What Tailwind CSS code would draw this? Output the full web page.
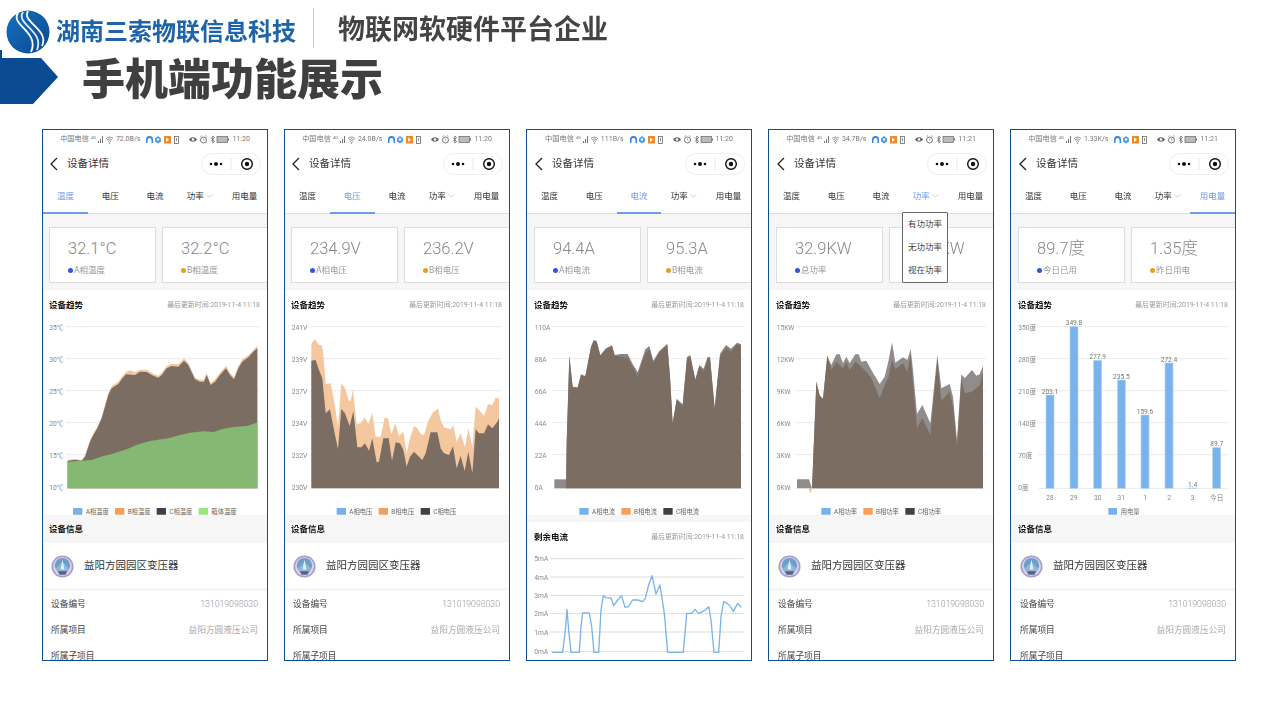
<!DOCTYPE html>
<html lang="zh-CN"><head><meta charset="utf-8"><title>手机端功能展示</title>
<script src="https://cdn.jsdelivr.net/npm/@tailwindcss/browser@4"></script></head>
<body class="bg-white w-[1279px] h-[720px] overflow-hidden font-['Roboto','Noto_Sans_CJK_SC',sans-serif]">
<svg width="0" height="0" class="absolute">
<defs>
<linearGradient id="lg" x1="0" y1="0" x2="1" y2="1"><stop offset="0" stop-color="#1770bd"/><stop offset="1" stop-color="#0b4a92"/></linearGradient>
<symbol id="sl" viewBox="0 0 22 9"><text x="0" y="4" font-size="4" fill="#777">4G</text><path d="M7 8h1V6H7zM9 8h1V4H9zM11 8h1V1h-1z" fill="#777"/><path d="M15 3.500a5 5 0 0 1 7 0M16 5a3.500 3.500 0 0 1 5 0M17 6.500a2 2 0 0 1 3 0" stroke="#777" stroke-width=".8" fill="none"/><circle cx="18.500" cy="8" r=".8" fill="#777"/></symbol>
<symbol id="sm" viewBox="0 0 34 9"><path d="M1 8V4.500a3.500 3.500 0 0 1 7 0V8H6.500V5a2 2 0 0 0-4 0v3z" fill="#2f86d8"/><path d="M13 1l3 2.500v3L13 8.500l-3-2v-3z" fill="#4b9be0"/><circle cx="13" cy="4.500" r="1.200" fill="#fff"/><rect x="19" y="1" width="7" height="7.500" fill="#f08a24"/><path d="M21 2.500l3 2.300-3 2.200z" fill="#fff"/><rect x="29.500" y="1.500" width="4" height="7" fill="none" stroke="#666" stroke-width=".8"/><path d="M31.500 3v3" stroke="#666" stroke-width=".8"/></symbol>
<symbol id="sr" viewBox="0 0 40 9"><path d="M0 4.500c2-3 6-3 8 0-2 3-6 3-8 0z" fill="#666"/><circle cx="4" cy="4.500" r="1.200" fill="#fff"/><circle cx="14.500" cy="5" r="3" fill="none" stroke="#666" stroke-width=".9"/><path d="M11.500 1.500l1.500-1M17.500 1.500l-1.500-1M14.500 3.500V5l1 .8" stroke="#666" stroke-width=".6" fill="none"/><path d="M22 2.500l3.500 4-1.700 1.500V1l1.700 1.500-3.500 4" fill="none" stroke="#666" stroke-width=".8"/><rect x="28" y="1.500" width="10.500" height="6" fill="#bbb" stroke="#666" stroke-width=".7"/><rect x="39" y="3.500" width="1" height="2" fill="#666"/></symbol>
<symbol id="cap" viewBox="0 0 60 22"><rect x=".5" y=".5" width="59" height="21" rx="10.500" fill="#fff" stroke="#efefef"/><circle cx="10" cy="11" r="1.300" fill="#111"/><circle cx="15" cy="11" r="2" fill="#111"/><circle cx="20" cy="11" r="1.300" fill="#111"/><path d="M30 5v12" stroke="#e8e8e8"/><circle cx="46" cy="11" r="5.300" fill="none" stroke="#111" stroke-width="1.400"/><circle cx="46" cy="11" r="2.200" fill="#111"/></symbol>
<symbol id="badge" viewBox="0 0 24 24"><circle cx="12" cy="12" r="11.500" fill="#a99cc9"/><circle cx="12" cy="12" r="9.800" fill="#d9d3e6"/><circle cx="12" cy="11" r="8" fill="#6c9ecb"/><path d="M5 14l7-7 7 7-3 4H8z" fill="#8db6d8"/><path d="M12 5l-2 10h4z" fill="#e8eef5"/><path d="M7 17h10l-2 3.500H9z" fill="#5a5f86"/></symbol>
</defs></svg>

<header class="h-[58px] flex items-center pl-[6px] blur-[0.4px]">
<svg width="44" height="44" viewBox="0 0 44 44" class="shrink-0 mt-[6px]"><circle cx="22" cy="22" r="21.500" fill="url(#lg)"/><path d="M12 3C4 15 34 22 25 42" stroke="#fff" stroke-width="1.800" fill="none"/><path d="M17 2C9 14 39 21 31 40" stroke="#dbe9f5" stroke-width="1.800" fill="none"/><path d="M22 1C15 12 44 20 36 36" stroke="#fff" stroke-width="1.800" fill="none"/></svg>
<span class="ml-[6px] mt-[6px] text-[24px] leading-none font-bold text-[#1d64aa] whitespace-nowrap">湖南三索物联信息科技</span>
<span class="ml-[17px] w-px h-[40px] bg-[#c3cad2] -mt-[2px]"></span>
<span class="ml-[24px] mt-[2px] text-[27px] leading-none font-bold text-[#444] whitespace-nowrap">物联网软硬件平台企业</span>
</header>
<div class="h-[46px] flex items-center relative blur-[0.4px]">
<svg width="58" height="54" viewBox="0 0 58 54" class="shrink-0 -mt-[8px]"><path d="M0 8h41l17 19-25 27H0z" fill="#0a4a91"/><path d="M0 0h2v8H0z" fill="#0a4a91"/></svg>
<h1 class="ml-[24px] -mt-[2px] text-[43px] leading-none font-black text-[#3f3f3f] whitespace-nowrap">手机端功能展示</h1>
</div>

<main class="mt-[25px] pl-[42px] flex gap-[16px] blur-[0.4px]">

<!-- 1 -->
<section class="w-[226px] h-[532px] border border-[#0b4f96] overflow-hidden relative bg-white shrink-0">
<div class="h-[17px] flex items-center justify-center gap-[2px] text-[7.200px] text-[#777] pt-[1px] whitespace-nowrap"><span>中国电信</span><svg width="22" height="9"><use href="#sl"/></svg><span class="ml-[1px] text-[7px]">72.0B/s</span><svg width="34" height="9" class="ml-[3px]"><use href="#sm"/></svg><svg width="40" height="9" class="ml-[8px]"><use href="#sr"/></svg><span class="ml-[1px] text-[7px]">11:20</span></div>
<div class="h-[32px] flex items-center pl-[6px] pt-[1px] relative"><svg width="10" height="14" viewBox="0 0 10 14"><path d="M8 1L2 7l6 6" fill="none" stroke="#222" stroke-width="1.300"/></svg><span class="ml-[8px] text-[10.500px] text-[#333]">设备详情</span><svg width="60" height="22" class="ml-auto mr-[6px]"><use href="#cap"/></svg></div>
<div class="h-[35px] grid grid-cols-5 border-b border-[#ddd] text-[8.500px] text-[#333]"><span class="flex items-center justify-center border-b-2 -mb-px pt-[2px] border-[#6f9be8] text-[#6f9be8]">温度</span><span class="flex items-center justify-center">电压</span><span class="flex items-center justify-center">电流</span><span class="flex items-center justify-center gap-[2px]">功率<svg width="7" height="4" viewBox="0 0 7 4"><path d="M.5.500l3 2.500 3-2.500" fill="none" stroke="#bbb" stroke-width=".7"/></svg></span><span class="flex items-center justify-center">用电量</span></div>
<div class="h-[76px] bg-[#f6f6f6] pt-[13px] pl-[6px] flex gap-[6px]">
<div class="w-[107px] h-[56px] shrink-0 bg-white border border-[#ddd] pl-[18px] pt-[10px]"><div class="text-[16.500px] leading-[22px] font-light text-[#888]">32.1°C</div><div class="mt-[4px] flex items-center gap-[1px] text-[8.500px] leading-[12px] text-[#999]"><i class="w-[5px] h-[5px] rounded-full bg-[#2f55e0]"></i>A相温度</div></div>
<div class="w-[107px] h-[56px] shrink-0 bg-white border border-[#ddd] pl-[18px] pt-[10px]"><div class="text-[16.500px] leading-[22px] font-light text-[#888]">32.2°C</div><div class="mt-[4px] flex items-center gap-[1px] text-[8.500px] leading-[12px] text-[#999]"><i class="w-[5px] h-[5px] rounded-full bg-[#e0a020]"></i>B相温度</div></div>
</div>
<div class="h-[20px] pt-[10px] pl-[6px] pr-[7px] flex justify-between items-center"><b class="text-[8.500px] font-bold text-[#111]">设备趋势</b><span class="text-[6.900px] text-[#999]">最后更新时间:2019-11-4 11:18</span></div>
<svg width="224" height="205" viewBox="9 0 672 615" class="block">
<g stroke="#eee" stroke-width="4"><path d="M78 50H660M78 146H660M78 242H660M78 338H660M78 434H660"/><path d="M78 535H660" stroke-width="2"/></g>
<g font-size="20" fill="#888"><text x="28" y="60">35℃</text><text x="28" y="156">30℃</text><text x="28" y="252">25℃</text><text x="28" y="348">20℃</text><text x="28" y="444">15℃</text><text x="28" y="541">10℃</text></g>
<path d="M83 450L105 447 125 450 135 436 150 390 160 370 172 350 185 320 195 285 205 248 215 228 235 215 245 200 258 186 270 181 285 186 300 179 320 179 340 191 355 197 365 188 380 168 395 161 415 163 432 145 445 160 465 203 480 209 492 209 500 190 512 220 525 208 540 188 558 168 570 188 582 202 595 168 607 148 625 136 640 120 652 107V535H83z" fill="#f5c79e"/>
<path d="M83 452L105 449 125 452 135 440 150 395 160 375 172 355 185 325 195 290 205 255 215 235 235 222 245 208 258 193 285 195 300 185 320 186 340 197 355 203 365 195 380 175 395 168 415 170 432 152 445 165 465 208 480 215 492 215 500 195 512 225 525 215 540 195 558 175 570 195 582 208 595 175 607 155 625 142 640 125 652 115V535H83z" fill="#7c6d63"/>
<path d="M83 455L155 450 190 438 215 432 260 418 295 403 330 393 385 385 420 375 450 368 490 364 520 366 545 358 580 351 620 348 650 338 652 338V535H83z" fill="#85b872"/>
<g font-size="19" fill="#666"><rect x="99" y="594" width="28" height="20" rx="1" fill="#78b0ea"/><text x="137" y="611">A相温度</text><rect x="225" y="594" width="28" height="20" rx="1" fill="#f5a05a"/><text x="263" y="611">B相温度</text><rect x="350" y="594" width="28" height="20" rx="1" fill="#404045"/><text x="388" y="611">C相温度</text><rect x="476" y="594" width="28" height="20" rx="1" fill="#94e87c"/><text x="514" y="611">箱体温度</text></g>
</svg>
<div class="h-[28px] bg-[#f6f6f6] px-[6px] flex items-center text-[8.500px] font-bold text-[#111]">设备信息</div>
<div class="h-[45px] flex items-center pl-[8px] pt-[1px] text-[10.500px] text-[#333]"><svg width="23" height="23"><use href="#badge"/></svg><span class="ml-[10px]">益阳方园园区变压器</span></div>
<div class="h-[3px] bg-[#f6f6f6]"></div>
<div class="h-[26px] pl-[8px] pr-[9px] pt-[1px] flex items-center justify-between text-[8.700px] text-[#444]"><span>设备编号</span><span class="font-light text-[#999]">131019098030</span></div>
<div class="h-[26px] pl-[8px] pr-[9px] pt-[1px] flex items-center justify-between text-[8.700px] text-[#444]"><span>所属项目</span><span class="text-[#aaa]">益阳方圆液压公司</span></div>
<div class="h-[26px] pl-[8px] pr-[9px] pt-[1px] flex items-center justify-between text-[8.700px] text-[#444]"><span>所属子项目</span></div>
</section>

<!-- 2 -->
<section class="w-[226px] h-[532px] border border-[#0b4f96] overflow-hidden relative bg-white shrink-0">
<div class="h-[17px] flex items-center justify-center gap-[2px] text-[7.200px] text-[#777] pt-[1px] whitespace-nowrap"><span>中国电信</span><svg width="22" height="9"><use href="#sl"/></svg><span class="ml-[1px] text-[7px]">24.0B/s</span><svg width="34" height="9" class="ml-[3px]"><use href="#sm"/></svg><svg width="40" height="9" class="ml-[8px]"><use href="#sr"/></svg><span class="ml-[1px] text-[7px]">11:20</span></div>
<div class="h-[32px] flex items-center pl-[6px] pt-[1px] relative"><svg width="10" height="14" viewBox="0 0 10 14"><path d="M8 1L2 7l6 6" fill="none" stroke="#222" stroke-width="1.300"/></svg><span class="ml-[8px] text-[10.500px] text-[#333]">设备详情</span><svg width="60" height="22" class="ml-auto mr-[6px]"><use href="#cap"/></svg></div>
<div class="h-[35px] grid grid-cols-5 border-b border-[#ddd] text-[8.500px] text-[#333]"><span class="flex items-center justify-center">温度</span><span class="flex items-center justify-center border-b-2 -mb-px pt-[2px] border-[#6f9be8] text-[#6f9be8]">电压</span><span class="flex items-center justify-center">电流</span><span class="flex items-center justify-center gap-[2px]">功率<svg width="7" height="4" viewBox="0 0 7 4"><path d="M.5.500l3 2.500 3-2.500" fill="none" stroke="#bbb" stroke-width=".7"/></svg></span><span class="flex items-center justify-center">用电量</span></div>
<div class="h-[76px] bg-[#f6f6f6] pt-[13px] pl-[6px] flex gap-[6px]">
<div class="w-[107px] h-[56px] shrink-0 bg-white border border-[#ddd] pl-[18px] pt-[10px]"><div class="text-[16.500px] leading-[22px] font-light text-[#888]">234.9V</div><div class="mt-[4px] flex items-center gap-[1px] text-[8.500px] leading-[12px] text-[#999]"><i class="w-[5px] h-[5px] rounded-full bg-[#2f55e0]"></i>A相电压</div></div>
<div class="w-[107px] h-[56px] shrink-0 bg-white border border-[#ddd] pl-[18px] pt-[10px]"><div class="text-[16.500px] leading-[22px] font-light text-[#888]">236.2V</div><div class="mt-[4px] flex items-center gap-[1px] text-[8.500px] leading-[12px] text-[#999]"><i class="w-[5px] h-[5px] rounded-full bg-[#e0a020]"></i>B相电压</div></div>
</div>
<div class="h-[20px] pt-[10px] pl-[6px] pr-[7px] flex justify-between items-center"><b class="text-[8.500px] font-bold text-[#111]">设备趋势</b><span class="text-[6.900px] text-[#999]">最后更新时间:2019-11-4 11:18</span></div>
<svg width="224" height="205" viewBox="3 0 672 615" class="block">
<g stroke="#eee" stroke-width="4"><path d="M76 50H653M76 146H653M76 242H653M76 338H653M76 434H653"/><path d="M76 535H653" stroke-width="2"/></g>
<g font-size="20" fill="#888"><text x="23" y="60">241V</text><text x="23" y="156">239V</text><text x="23" y="252">237V</text><text x="23" y="348">234V</text><text x="23" y="444">232V</text><text x="23" y="541">230V</text></g>
<path d="M82 103L92 87 105 105 113 105 118 130 125 222 140 220 150 270 162 350 172 220 183 235 195 272 200 272 207 238 218 342 230 340 242 322 253 343 265 308 275 380 290 380 302 323 312 325 322 372 334 340 345 378 358 365 368 430 378 385 390 348 400 355 410 372 420 375 432 335 445 310 462 295 470 330 480 352 500 358 508 345 518 395 530 370 543 412 553 355 565 412 575 290 585 300 600 318 612 283 625 286 635 263 645 265V535H82z" fill="#f5c79e"/>
<path d="M82 152L95 150 105 180 115 205 125 310 138 298 150 360 162 418 172 297 183 310 197 348 208 303 220 412 232 412 243 400 255 422 265 385 278 457 285 455 298 385 314 385 324 452 335 397 348 400 358 420 368 470 378 440 390 425 402 437 415 450 425 430 440 367 460 367 470 415 480 430 495 435 507 408 518 475 530 437 542 483 553 425 565 490 575 358 585 370 600 370 612 343 625 355 640 335 645 325V535H82z" fill="#7c6d63"/>
<g font-size="19" fill="#666"><rect x="158" y="594" width="28" height="20" rx="1" fill="#78b0ea"/><text x="196" y="611">A相电压</text><rect x="284" y="594" width="28" height="20" rx="1" fill="#f5a05a"/><text x="322" y="611">B相电压</text><rect x="410" y="594" width="28" height="20" rx="1" fill="#404045"/><text x="448" y="611">C相电压</text></g>
</svg>
<div class="h-[28px] bg-[#f6f6f6] px-[6px] flex items-center text-[8.500px] font-bold text-[#111]">设备信息</div>
<div class="h-[45px] flex items-center pl-[8px] pt-[1px] text-[10.500px] text-[#333]"><svg width="23" height="23"><use href="#badge"/></svg><span class="ml-[10px]">益阳方园园区变压器</span></div>
<div class="h-[3px] bg-[#f6f6f6]"></div>
<div class="h-[26px] pl-[8px] pr-[9px] pt-[1px] flex items-center justify-between text-[8.700px] text-[#444]"><span>设备编号</span><span class="font-light text-[#999]">131019098030</span></div>
<div class="h-[26px] pl-[8px] pr-[9px] pt-[1px] flex items-center justify-between text-[8.700px] text-[#444]"><span>所属项目</span><span class="text-[#aaa]">益阳方圆液压公司</span></div>
<div class="h-[26px] pl-[8px] pr-[9px] pt-[1px] flex items-center justify-between text-[8.700px] text-[#444]"><span>所属子项目</span></div>
</section>

<!-- 3 -->
<section class="w-[226px] h-[532px] border border-[#0b4f96] overflow-hidden relative bg-white shrink-0">
<div class="h-[17px] flex items-center justify-center gap-[2px] text-[7.200px] text-[#777] pt-[1px] whitespace-nowrap"><span>中国电信</span><svg width="22" height="9"><use href="#sl"/></svg><span class="ml-[1px] text-[7px]">111B/s</span><svg width="34" height="9" class="ml-[3px]"><use href="#sm"/></svg><svg width="40" height="9" class="ml-[8px]"><use href="#sr"/></svg><span class="ml-[1px] text-[7px]">11:20</span></div>
<div class="h-[32px] flex items-center pl-[7px] pt-[1px] relative"><svg width="10" height="14" viewBox="0 0 10 14"><path d="M8 1L2 7l6 6" fill="none" stroke="#222" stroke-width="1.300"/></svg><span class="ml-[8px] text-[10.500px] text-[#333]">设备详情</span><svg width="60" height="22" class="ml-auto mr-[6px]"><use href="#cap"/></svg></div>
<div class="h-[35px] grid grid-cols-5 border-b border-[#ddd] text-[8.500px] text-[#333]"><span class="flex items-center justify-center">温度</span><span class="flex items-center justify-center">电压</span><span class="flex items-center justify-center border-b-2 -mb-px pt-[2px] border-[#6f9be8] text-[#6f9be8]">电流</span><span class="flex items-center justify-center gap-[2px]">功率<svg width="7" height="4" viewBox="0 0 7 4"><path d="M.5.500l3 2.500 3-2.500" fill="none" stroke="#bbb" stroke-width=".7"/></svg></span><span class="flex items-center justify-center">用电量</span></div>
<div class="h-[76px] bg-[#f6f6f6] pt-[13px] pl-[7px] flex gap-[6px]">
<div class="w-[107px] h-[56px] shrink-0 bg-white border border-[#ddd] pl-[18px] pt-[10px]"><div class="text-[16.500px] leading-[22px] font-light text-[#888]">94.4A</div><div class="mt-[4px] flex items-center gap-[1px] text-[8.500px] leading-[12px] text-[#999]"><i class="w-[5px] h-[5px] rounded-full bg-[#2f55e0]"></i>A相电流</div></div>
<div class="w-[107px] h-[56px] shrink-0 bg-white border border-[#ddd] pl-[18px] pt-[10px]"><div class="text-[16.500px] leading-[22px] font-light text-[#888]">95.3A</div><div class="mt-[4px] flex items-center gap-[1px] text-[8.500px] leading-[12px] text-[#999]"><i class="w-[5px] h-[5px] rounded-full bg-[#e0a020]"></i>B相电流</div></div>
</div>
<div class="h-[20px] pt-[10px] pl-[7px] pr-[7px] flex justify-between items-center"><b class="text-[8.500px] font-bold text-[#111]">设备趋势</b><span class="text-[6.900px] text-[#999]">最后更新时间:2019-11-4 11:18</span></div>
<svg width="224" height="205" viewBox="3 0 672 615" class="block">
<g stroke="#eee" stroke-width="4"><path d="M78 50H653M78 146H653M78 242H653M78 338H653M78 434H653"/><path d="M78 535H653" stroke-width="2"/></g>
<g font-size="20" fill="#888"><text x="26" y="60">110A</text><text x="26" y="156">88A</text><text x="26" y="252">66A</text><text x="26" y="348">44A</text><text x="26" y="444">22A</text><text x="26" y="541">0A</text></g>
<rect x="85" y="508" width="36" height="27" fill="#8f8a88"/>
<path d="M120 535L122 400 130 137 140 230 155 232 165 193 178 198 195 110 203 90 212 93 223 135 240 115 258 106 266 135 285 132 305 132 320 162 335 187 345 157 358 118 370 108 382 152 400 123 424 101 432 200 440 340 452 266 470 283 483 141 493 135 508 208 520 165 533 176 545 141 552 141 566 293 582 131 600 105 615 116 633 98 645 103V535z" fill="#8a8480"/>
<path d="M120 535L122 400 130 139 140 232 155 235 165 195 178 200 195 112 203 92 212 95 223 137 240 118 258 108 266 137 285 140 305 145 320 170 335 200 345 165 358 130 370 118 382 158 400 127 424 105 432 200 440 340 452 270 470 288 483 145 493 140 508 212 520 170 533 185 545 145 552 145 566 297 582 140 600 115 615 125 633 103 645 107V535z" fill="#7c6d63"/>
<g font-size="19" fill="#666"><rect x="160" y="594" width="28" height="20" rx="1" fill="#78b0ea"/><text x="198" y="611">A相电流</text><rect x="286" y="594" width="28" height="20" rx="1" fill="#f5a05a"/><text x="324" y="611">B相电流</text><rect x="412" y="594" width="28" height="20" rx="1" fill="#404045"/><text x="450" y="611">C相电流</text></g>
</svg>
<div class="h-[7px] bg-[#f6f6f6]"></div>
<div class="h-[30px] pl-[7px] pr-[7px] flex justify-between items-center"><b class="text-[8.500px] font-bold text-[#111]">剩余电流</b><span class="text-[6.900px] text-[#999]">最后更新时间:2019-11-4 11:18</span></div>
<svg width="224" height="108" viewBox="3 96 672 324" class="block">
<g stroke="#ddd" stroke-width="3"><path d="M72 116H653M72 171H653M72 226H653M72 281H653M72 336H653M72 395H653"/></g>
<g font-size="20" fill="#888"><text x="25" y="124">5mA</text><text x="25" y="179">4mA</text><text x="25" y="234">3mA</text><text x="25" y="289">2mA</text><text x="25" y="344">1mA</text><text x="25" y="401">0mA</text></g>
<path d="M78 397L110 397 118 330 123 268 128 330 135 397 160 397 165 320 170 279 190 279 197 320 204 397 218 397 225 270 232 227 240 233 255 234 263 257 275 240 287 227 297 262 307 260 320 240 335 240 350 245 358 235 368 195 378 167 390 222 402 195 415 280 425 397 472 397 482 280 497 280 507 268 518 280 535 272 548 260 555 300 564 397 578 397 585 290 593 245 610 255 622 274 635 250 646 262" fill="none" stroke="#7ab3ea" stroke-width="4" stroke-linejoin="round"/>
</svg>
</section>

<!-- 4 -->
<section class="w-[226px] h-[532px] border border-[#0b4f96] overflow-hidden relative bg-white shrink-0">
<div class="h-[17px] flex items-center justify-center gap-[2px] text-[7.200px] text-[#777] pt-[1px] whitespace-nowrap"><span>中国电信</span><svg width="22" height="9"><use href="#sl"/></svg><span class="ml-[1px] text-[7px]">34.7B/s</span><svg width="34" height="9" class="ml-[3px]"><use href="#sm"/></svg><svg width="40" height="9" class="ml-[8px]"><use href="#sr"/></svg><span class="ml-[1px] text-[7px]">11:21</span></div>
<div class="h-[32px] flex items-center pl-[7px] pt-[1px] relative"><svg width="10" height="14" viewBox="0 0 10 14"><path d="M8 1L2 7l6 6" fill="none" stroke="#222" stroke-width="1.300"/></svg><span class="ml-[8px] text-[10.500px] text-[#333]">设备详情</span><svg width="60" height="22" class="ml-auto mr-[6px]"><use href="#cap"/></svg></div>
<div class="h-[35px] grid grid-cols-5 border-b border-[#ddd] text-[8.500px] text-[#333]"><span class="flex items-center justify-center">温度</span><span class="flex items-center justify-center">电压</span><span class="flex items-center justify-center">电流</span><span class="flex items-center justify-center gap-[2px] text-[#6f9be8]">功率<svg width="7" height="4" viewBox="0 0 7 4"><path d="M.5.500l3 2.500 3-2.500" fill="none" stroke="#bbb" stroke-width=".7"/></svg></span><span class="flex items-center justify-center">用电量</span></div>
<div class="h-[76px] bg-[#f6f6f6] pt-[13px] pl-[7px] flex gap-[6px]">
<div class="w-[107px] h-[56px] shrink-0 bg-white border border-[#ddd] pl-[18px] pt-[10px]"><div class="text-[16.500px] leading-[22px] font-light text-[#888]">32.9KW</div><div class="mt-[4px] flex items-center gap-[1px] text-[8.500px] leading-[12px] text-[#999]"><i class="w-[5px] h-[5px] rounded-full bg-[#2f55e0]"></i>总功率</div></div>
<div class="w-[107px] h-[56px] shrink-0 bg-white border border-[#ddd] pl-[18px] pt-[10px]"><div class="text-[16.500px] leading-[22px] font-light text-[#888]">33.1KW</div></div>
</div>
<div class="absolute left-[133px] top-[82px] w-[46px] h-[71px] bg-white border border-[#666] rounded-[1px] text-[8.500px] text-[#444]"><span class="h-[23px] flex items-center justify-center">有功功率</span><span class="h-[23px] flex items-center justify-center">无功功率</span><span class="h-[23px] flex items-center justify-center">视在功率</span></div>
<div class="h-[20px] pt-[10px] pl-[7px] pr-[7px] flex justify-between items-center"><b class="text-[8.500px] font-bold text-[#111]">设备趋势</b><span class="text-[6.900px] text-[#999]">最后更新时间:2019-11-4 11:18</span></div>
<svg width="224" height="205" viewBox="3 0 672 615" class="block">
<g stroke="#eee" stroke-width="4"><path d="M82 50H653M82 146H653M82 242H653M82 338H653M82 434H653"/><path d="M82 535H653" stroke-width="2"/></g>
<g font-size="20" fill="#888"><text x="26" y="60">15KW</text><text x="26" y="156">12KW</text><text x="26" y="252">9KW</text><text x="26" y="348">6KW</text><text x="26" y="444">3KW</text><text x="26" y="541">0KW</text></g>
<path d="M87 508H123L132 535H87z" fill="#8f8c8b"/><path d="M122 535L127 550 132 535z" fill="#f0b888"/>
<path d="M132 535L145 225 155 262 165 265 178 140 190 165 205 133 215 133 225 160 235 140 245 160 262 133 272 133 280 155 295 152 310 180 335 222 350 200 362 150 372 97 382 158 405 142 418 150 428 117 435 180 447 312 463 285 487 340 508 135 520 235 545 222 555 260 567 390 580 193 590 205 612 180 625 197 635 193 645 167V535z" fill="#8f8c8b"/>
<path d="M132 535L145 213 155 255 165 268 178 135 190 180 205 155 225 175 235 155 245 180 262 155 280 170 295 185 310 205 335 265 350 225 362 200 372 150 382 178 405 160 418 185 428 135 435 220 447 355 463 325 487 375 508 150 520 272 545 245 555 290 567 410 580 205 590 250 612 245 635 225 645 185V535z" fill="#7c6d63"/>
<g font-size="19" fill="#666"><rect x="160" y="594" width="28" height="20" rx="1" fill="#78b0ea"/><text x="198" y="611">A相功率</text><rect x="286" y="594" width="28" height="20" rx="1" fill="#f5a05a"/><text x="324" y="611">B相功率</text><rect x="412" y="594" width="28" height="20" rx="1" fill="#404045"/><text x="450" y="611">C相功率</text></g>
</svg>
<div class="h-[28px] bg-[#f6f6f6] px-[7px] flex items-center text-[8.500px] font-bold text-[#111]">设备信息</div>
<div class="h-[45px] flex items-center pl-[9px] pt-[1px] text-[10.500px] text-[#333]"><svg width="23" height="23"><use href="#badge"/></svg><span class="ml-[10px]">益阳方园园区变压器</span></div>
<div class="h-[3px] bg-[#f6f6f6]"></div>
<div class="h-[26px] pl-[9px] pr-[9px] pt-[1px] flex items-center justify-between text-[8.700px] text-[#444]"><span>设备编号</span><span class="font-light text-[#999]">131019098030</span></div>
<div class="h-[26px] pl-[9px] pr-[9px] pt-[1px] flex items-center justify-between text-[8.700px] text-[#444]"><span>所属项目</span><span class="text-[#aaa]">益阳方圆液压公司</span></div>
<div class="h-[26px] pl-[9px] pr-[9px] pt-[1px] flex items-center justify-between text-[8.700px] text-[#444]"><span>所属子项目</span></div>
</section>

<!-- 5 -->
<section class="w-[226px] h-[532px] border border-[#0b4f96] overflow-hidden relative bg-white shrink-0">
<div class="h-[17px] flex items-center justify-center gap-[2px] text-[7.200px] text-[#777] pt-[1px] whitespace-nowrap"><span>中国电信</span><svg width="22" height="9"><use href="#sl"/></svg><span class="ml-[1px] text-[7px]">1.33K/s</span><svg width="34" height="9" class="ml-[3px]"><use href="#sm"/></svg><svg width="40" height="9" class="ml-[8px]"><use href="#sr"/></svg><span class="ml-[1px] text-[7px]">11:21</span></div>
<div class="h-[32px] flex items-center pl-[7px] pt-[1px] relative"><svg width="10" height="14" viewBox="0 0 10 14"><path d="M8 1L2 7l6 6" fill="none" stroke="#222" stroke-width="1.300"/></svg><span class="ml-[8px] text-[10.500px] text-[#333]">设备详情</span><svg width="60" height="22" class="ml-auto mr-[6px]"><use href="#cap"/></svg></div>
<div class="h-[35px] grid grid-cols-5 border-b border-[#ddd] text-[8.500px] text-[#333]"><span class="flex items-center justify-center">温度</span><span class="flex items-center justify-center">电压</span><span class="flex items-center justify-center">电流</span><span class="flex items-center justify-center gap-[2px]">功率<svg width="7" height="4" viewBox="0 0 7 4"><path d="M.5.500l3 2.500 3-2.500" fill="none" stroke="#bbb" stroke-width=".7"/></svg></span><span class="flex items-center justify-center border-b-2 -mb-px pt-[2px] border-[#6f9be8] text-[#6f9be8]">用电量</span></div>
<div class="h-[76px] bg-[#f6f6f6] pt-[13px] pl-[7px] flex gap-[6px]">
<div class="w-[107px] h-[56px] shrink-0 bg-white border border-[#ddd] pl-[18px] pt-[10px]"><div class="text-[16.500px] leading-[22px] font-light text-[#888]">89.7度</div><div class="mt-[4px] flex items-center gap-[1px] text-[8.500px] leading-[12px] text-[#999]"><i class="w-[5px] h-[5px] rounded-full bg-[#2f55e0]"></i>今日已用</div></div>
<div class="w-[107px] h-[56px] shrink-0 bg-white border border-[#ddd] pl-[18px] pt-[10px]"><div class="text-[16.500px] leading-[22px] font-light text-[#888]">1.35度</div><div class="mt-[4px] flex items-center gap-[1px] text-[8.500px] leading-[12px] text-[#999]"><i class="w-[5px] h-[5px] rounded-full bg-[#e0a020]"></i>昨日用电</div></div>
</div>
<div class="h-[20px] pt-[10px] pl-[7px] pr-[7px] flex justify-between items-center"><b class="text-[8.500px] font-bold text-[#111]">设备趋势</b><span class="text-[6.900px] text-[#999]">最后更新时间:2019-11-4 11:18</span></div>
<svg width="224" height="205" viewBox="3 0 672 615" class="block">
<g stroke="#eee" stroke-width="4"><path d="M85 50H655M85 146H655M85 242H655M85 338H655M85 434H655"/><path d="M85 535H655" stroke="#ddd" stroke-width="2"/></g>
<g font-size="20" fill="#888"><text x="25" y="60">350度</text><text x="25" y="156">280度</text><text x="25" y="252">210度</text><text x="25" y="348">140度</text><text x="25" y="444">70度</text><text x="25" y="541">0度</text></g>
<g fill="#79b2ec" stroke="#b5d5f4" stroke-width="2"><rect x="108" y="255" width="24" height="280"/><rect x="180" y="50" width="24" height="485"/><rect x="251" y="151" width="24" height="384"/><rect x="322" y="210" width="24" height="325"/><rect x="393" y="315" width="24" height="220"/><rect x="465" y="159" width="24" height="376"/><rect x="536" y="534" width="24" height="1"/><rect x="608" y="413" width="24" height="122"/></g>
<g font-size="20" fill="#777" text-anchor="middle"><text x="120" y="251">203.1</text><text x="192" y="46">349.8</text><text x="263" y="147">277.9</text><text x="334" y="206">235.5</text><text x="405" y="311">159.6</text><text x="477" y="155">272.4</text><text x="548" y="530">1.4</text><text x="620" y="408">89.7</text></g>
<g font-size="20" fill="#888" text-anchor="middle"><text x="120" y="569">28</text><text x="191" y="569">29</text><text x="263" y="569">30</text><text x="334" y="569">31</text><text x="405" y="569">1</text><text x="477" y="569">2</text><text x="548" y="569">3</text><text x="620" y="569">今日</text></g>
<g font-size="19" fill="#666"><rect x="295" y="594" width="26" height="20" rx="1" fill="#78b0ea"/><text x="332" y="611">用电量</text></g>
</svg>
<div class="h-[28px] bg-[#f6f6f6] px-[7px] flex items-center text-[8.500px] font-bold text-[#111]">设备信息</div>
<div class="h-[45px] flex items-center pl-[9px] pt-[1px] text-[10.500px] text-[#333]"><svg width="23" height="23"><use href="#badge"/></svg><span class="ml-[10px]">益阳方园园区变压器</span></div>
<div class="h-[3px] bg-[#f6f6f6]"></div>
<div class="h-[26px] pl-[9px] pr-[9px] pt-[1px] flex items-center justify-between text-[8.700px] text-[#444]"><span>设备编号</span><span class="font-light text-[#999]">131019098030</span></div>
<div class="h-[26px] pl-[9px] pr-[9px] pt-[1px] flex items-center justify-between text-[8.700px] text-[#444]"><span>所属项目</span><span class="text-[#aaa]">益阳方圆液压公司</span></div>
<div class="h-[26px] pl-[9px] pr-[9px] pt-[1px] flex items-center justify-between text-[8.700px] text-[#444]"><span>所属子项目</span></div>
</section>
</main>
</body></html>
